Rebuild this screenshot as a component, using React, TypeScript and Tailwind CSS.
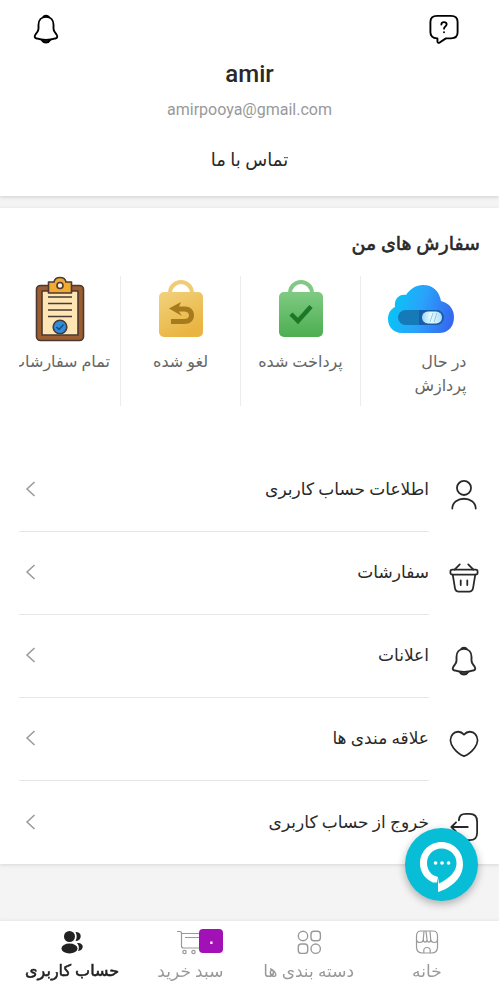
import React from "react";

const Bell = () => (
  <svg viewBox="0 0 32 32" className="size-[30px]" fill="none" stroke="currentColor" strokeWidth="2" strokeLinejoin="round" strokeLinecap="round">
    <path d="M16 3c-5 0-8 3.600-8 8.500v4c0 1.600-.5 2.700-1.500 4L4.700 22c-1.400 2.300-.7 3.600 1.300 4.100 6 1.900 14 1.900 20 0 2-.5 2.700-1.800 1.300-4.100L25.500 19.500c-1-1.300-1.500-2.400-1.500-4v-4c0-4.900-3-8.500-8-8.500z" />
    <path d="M13.500 2.800c1.500-1 3.500-1 5 0M12 28c1.500 3 6.500 3 8 0" strokeWidth="2.400" />
  </svg>
);

const Question = () => (
  <svg viewBox="0 0 32 32" className="size-[30px]" fill="none" stroke="currentColor" strokeWidth="2" strokeLinejoin="round" strokeLinecap="round">
    <path d="M8.500 2h15c4.500 0 7 2.300 7 6.500v11c0 4.200-2.500 6.500-7 6.500h-5.500l-6.600 4.500c-1.400.7-2.400.2-2.400-1.200V26H8.500c-4.500-.3-7-2.500-7-6.500v-11C1.500 4.300 4 2 8.500 2z" />
    <path d="M13.200 11.200c.2-3.500 5.900-3.200 5.600 0-.2 2.200-2.800 2-2.800 4.400M16 19.300v.2" />
  </svg>
);

const Cloud = () => (
  <svg viewBox="0 0 66 66" className="size-[66px]">
    <defs>
      <linearGradient id="cloud" x1="0" x2="1" y1=".4" y2=".6">
        <stop offset="0" stopColor="#05c8f5" />
        <stop offset=".5" stopColor="#2aa2fb" />
        <stop offset="1" stopColor="#3568ee" />
      </linearGradient>
      <linearGradient id="knob" x1="0" x2="1">
        <stop offset="0" stopColor="#9bd9f7" />
        <stop offset=".45" stopColor="#e8fbff" />
        <stop offset="1" stopColor="#b3ddfb" />
      </linearGradient>
    </defs>
    <path d="M14 57C5 57 0 50.500 0 43c0-6 3-10 7-12C6 23 11 18 18 19c4-6 10-10 17-10 10 0 16 6 18 16 8 2 13 8 13 16 0 10-6 16-15 16z" fill="url(#cloud)" />
    <rect x="10" y="34" width="46" height="15" rx="7.500" fill="#147bb8" />
    <path d="M31 34h17.500a7.500 7.500 0 0 1 0 15H31z" fill="#1c4fa5" opacity=".65" />
    <rect x="34" y="35.500" width="20" height="12" rx="6" fill="url(#knob)" />
    <path d="M42 46l3-9M46 46l3-9" stroke="#8fcaf0" />
  </svg>
);

const PaidBag = () => (
  <svg viewBox="0 0 66 66" className="size-[66px]">
    <defs>
      <linearGradient id="paid" x1="0" x2="0" y1="0" y2="1">
        <stop offset="0" stopColor="#7fca82" />
        <stop offset="1" stopColor="#4cae50" />
      </linearGradient>
    </defs>
    <path d="M22 20v-3a11 11 0 0 1 22 0v3" fill="none" stroke="#81c984" strokeWidth="4" />
    <rect x="11" y="16" width="44" height="45" rx="5" fill="url(#paid)" />
    <path d="M23 38l7 7 13-14.500" fill="none" stroke="#1c7728" strokeWidth="4.500" />
  </svg>
);

const CanceledBag = () => (
  <svg viewBox="0 0 66 66" className="size-[66px]">
    <defs>
      <linearGradient id="canceled" x1="0" x2=".5" y1="0" y2="1">
        <stop offset="0" stopColor="#f2d27d" />
        <stop offset="1" stopColor="#e9b441" />
      </linearGradient>
    </defs>
    <path d="M22 20v-3a11 11 0 0 1 22 0v3" fill="none" stroke="#f0cd74" strokeWidth="4" />
    <rect x="11" y="16" width="44" height="45" rx="5" fill="url(#canceled)" />
    <path d="M21 32.500L33 26l-2 4.500h6c6 0 9 4 9 9 0 5-4 8.500-10 8.500H23v-5h13c3 0 5-1 5-3.500S39 35.500 36 35.500h-5l3 4.500z" fill="#a57b1c" />
  </svg>
);

const Clipboard = () => (
  <svg viewBox="0 0 66 66" className="size-[66px]" stroke="#4a3a33" strokeWidth="1.600" strokeLinejoin="round">
    <rect x="9.500" y="9.500" width="47" height="55" rx="4" fill="#9c5d31" />
    <path d="M15 15h36v44H15z" fill="#fde6b4" />
    <path d="M21 21h24M21 27.500h24M21 34h24M21 40.500h24" />
    <path d="M21.500 6H27c1-6 11-6 12 0h5.500v11h-23z" fill="#f2aa32" />
    <circle cx="33" cy="9.500" r="3" fill="#fff4db" />
    <circle cx="33" cy="51" r="6.800" fill="#318ddb" />
    <path d="M29.500 51l2.500 2.500 4.500-5" fill="none" stroke="#164d82" />
  </svg>
);

const User = () => (
  <svg viewBox="0 0 32 32" className="size-[30px]" fill="none" stroke="currentColor" strokeWidth="1.900" strokeLinecap="round">
    <circle cx="16" cy="8.500" r="7.500" />
    <path d="M3.500 30.500c0-14 25-14 25 0" />
  </svg>
);

const Basket = () => (
  <svg viewBox="0 0 32 32" className="size-[30px]" fill="none" stroke="currentColor" strokeWidth="1.900" strokeLinecap="round" strokeLinejoin="round">
    <path d="M11.500 1.500L6 7M20.500 1.500L26 7" />
    <rect x="1.500" y="7" width="29" height="5.500" rx="2" />
    <path d="M4 12.500l2.300 14c.5 3 1.700 4 4.200 4h11c2.500 0 3.700-1 4.200-4l2.300-14M12.500 18.500v5M19.500 18.500v5" />
  </svg>
);

const HeartIcon = () => (
  <svg viewBox="0 0 32 32" className="size-[30px]" fill="none" stroke="currentColor" strokeWidth="1.900" strokeLinejoin="round">
    <path d="M16 6c3.500-4 9-4 12-.5 4 4.500 2.500 10.500-1 15-2.800 3.600-7 7-11 8.500-4-1.500-8.200-4.900-11-8.500-3.500-4.500-5-10.500-1-15C7 2 12.500 2 16 6z" />
  </svg>
);

const Logout = () => (
  <svg viewBox="0 0 32 32" className="size-[30px]" fill="none" stroke="currentColor" strokeWidth="1.900" strokeLinecap="round" strokeLinejoin="round">
    <path d="M10.500 9C11 3.500 13 2 18 2h4c5.500 0 8 2.500 8 8v12c0 5.500-2.500 8-8 8h-4c-5 0-7-1.500-7.500-7M20 16H2.500M7.500 11L2.500 16l5 5" />
  </svg>
);

const Shop = () => (
  <svg viewBox="0 0 26 26" className="size-[26px]" fill="none" stroke="currentColor" strokeWidth="1.200">
    <path d="M7 2h12c3 0 4.500 2 4.500 5v11c0 4-2 6-6 6h-9c-4 0-6-2-6-6V7C2.500 4 4 2 7 2z" />
    <path d="M10 2l-.7 8.500c-.5 4-6.800 4-6.800 0M9.300 10.500c0 3.500 3.700 3.500 3.700 0 0 3.500 3.700 3.500 3.700 0L16 2M16.700 10.500c.5 4 6.800 4 6.800 0M13 10.500L12 2M9.800 24v-2.500c0-4 6.400-4 6.400 0V24" />
  </svg>
);

const Categories = () => (
  <svg viewBox="0 0 26 26" className="size-[26px]" fill="none" stroke="currentColor" strokeWidth="1.400">
    <circle cx="7" cy="7" r="4.700" />
    <rect x="15" y="2.300" width="9.400" height="9.400" rx="3" />
    <rect x="2.300" y="15" width="9.400" height="9.400" rx="3" />
    <circle cx="19.700" cy="19.700" r="4.700" />
  </svg>
);

const Cart = () => (
  <svg viewBox="0 0 26 26" className="size-[26px]" fill="none" stroke="currentColor" strokeWidth="1.200">
    <path d="M0 2.500h2.500c1.500 0 2 .5 2 2V17c0 1.500.5 2 2 2H25M4.500 4.500H25M8 8.500h16" />
    <circle cx="7.500" cy="23" r="1.700" />
    <circle cx="16.500" cy="23" r="1.700" />
  </svg>
);

const Users = () => (
  <svg viewBox="0 0 26 26" className="size-[26px]" fill="currentColor">
    <circle cx="10.500" cy="7.500" r="5.500" />
    <ellipse cx="10.500" cy="19.500" rx="8" ry="5" />
    <path d="M16.500 3c7-1 7 9 0 9 1.600-3 1.600-6 0-9zM18 14c7-1 8 7 1 8 1.500-3 1.200-5-1-8z" />
  </svg>
);

const Chevron = () => (
  <svg viewBox="0 0 12 18" className="mr-auto ml-1.5 h-[18px] w-3 text-[#999]" fill="none" stroke="currentColor" strokeWidth="1.500">
    <path d="M9.500 2L2 9l7.500 7" />
  </svg>
);

const orders = [
  { label: "در حال پردازش", icon: <Cloud />, text: "w-[92px] text-right" },
  { label: "پرداخت شده", icon: <PaidBag />, text: "whitespace-nowrap" },
  { label: "لغو شده", icon: <CanceledBag />, text: "whitespace-nowrap" },
  { label: "تمام سفارشات", icon: <Clipboard />, text: "whitespace-nowrap" },
];

const menu = [
  { label: "اطلاعات حساب کاربری", icon: <User /> },
  { label: "سفارشات", icon: <Basket /> },
  { label: "اعلانات", icon: <Bell /> },
  { label: "علاقه مندی ها", icon: <HeartIcon /> },
  { label: "خروج از حساب کاربری", icon: <Logout /> },
];

const App = () => {
  return (
    <div dir="rtl" className="min-h-screen bg-[#f4f4f4] pb-20 font-['Roboto','DejaVu_Sans',sans-serif] text-[#292929]">
      {/* Profile */}
      <header className="h-[196px] bg-white pt-3.5 shadow-[0_1px_4px_rgba(0,0,0,0.16)]">
        <div className="flex justify-between pr-10 pl-[31px] text-black">
          <button aria-label="راهنما"><Question /></button>
          <button aria-label="اعلانات"><Bell /></button>
        </div>
        <div className="flex flex-col items-center pt-4">
          <h1 className="text-2xl font-medium leading-7">amir</h1>
          <p className="mt-3 text-base leading-5 text-[#999]">amirpooya@gmail.com</p>
          <a href="#contact" className="mt-7 text-lg leading-6">تماس با ما</a>
        </div>
      </header>

      <main className="mt-3 bg-white shadow-[0_1px_4px_rgba(0,0,0,0.12)]">
        {/* Orders */}
        <section className="px-[19px] pt-5">
          <h2 className="text-[19px] leading-8 [-webkit-text-stroke:0.6px]">سفارش های من</h2>
          <div className="mt-4 flex overflow-hidden">
            {orders.map((order) => (
              <a
                key={order.label}
                href="#orders"
                className="flex h-[130px] w-[120px] shrink-0 flex-col items-center border-l border-[#ececec] text-base leading-6 text-[#666] last:border-0"
              >
                {order.icon}
                <span className={"mt-2 " + order.text}>{order.label}</span>
              </a>
            ))}
          </div>
        </section>

        {/* Account menu */}
        <nav className="px-[19px] pt-[43px]">
          {menu.map((item) => (
            <a key={item.label} href="#account" className="group flex h-[83px] items-stretch">
              <span className="flex w-[51px] items-center pt-2 pr-px">{item.icon}</span>
              <span className="flex grow items-center border-b border-[#e6e6e6] pb-0.5 group-last:border-0">
                <span className="text-[17px] leading-6">{item.label}</span>
                <Chevron />
              </span>
            </a>
          ))}
        </nav>
      </main>

      {/* Support chat */}
      <button
        aria-label="گفتگو"
        className="fixed right-[21px] bottom-[99px] z-10 size-[73px] rounded-full bg-[#08bdd6] shadow-[0_3px_8px_rgba(0,0,0,0.3)]"
      >
        <svg viewBox="0 0 73 73" className="size-full">
          <path d="M33 48V64C46 60 58 50 58 36 58 23 48 14 36.500 14S15 23 15 35.500C15 44 20 51 28 54.500z" fill="white" />
          <path d="M33 49.500c-7-2-11-8-11-14.500 0-8 6-14.500 14.500-14.500S51.500 27 51.500 35c0 8-6 14-14.500 19l-3 1.500z" fill="#08bdd6" />
          <path d="M22 45l11 4-1 5.500h-4z" fill="white" />
          <path d="M30.500 35h.1M37 35h.1M43.500 35h.1" stroke="white" strokeWidth="3.600" strokeLinecap="round" />
        </svg>
      </button>

      {/* Bottom bar */}
      <nav className="fixed inset-x-0 bottom-0 grid h-[79px] grid-cols-4 bg-white px-[13px] text-[17px] leading-6 text-[#999] shadow-[0_-1px_3px_rgba(0,0,0,0.06)]">
        <a href="#home" className="flex flex-col items-center gap-1 pt-2">
          <Shop />
          خانه
        </a>
        <a href="#categories" className="flex flex-col items-center gap-1 pt-2">
          <Categories />
          دسته بندی ها
        </a>
        <a href="#cart" className="flex flex-col items-center gap-1 pt-2">
          <span className="relative">
            <Cart />
            <span className="absolute top-0 left-[22px] flex size-6 items-center justify-center rounded-sm bg-[#a111b6] text-xl text-white">۰</span>
          </span>
          سبد خرید
        </a>
        <a href="#account" className="flex flex-col items-center gap-1 pt-2 text-base leading-6 text-[#222] [-webkit-text-stroke:0.5px]">
          <Users />
          حساب کاربری
        </a>
      </nav>
    </div>
  );
};

export default App;
